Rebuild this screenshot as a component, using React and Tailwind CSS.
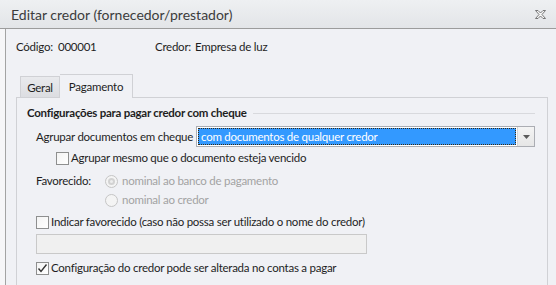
import React from "react";

const font = { fontFamily: 'Lato, "Open Sans", sans-serif' };

const Checkbox = ({ checked }) => (
  <span className="flex h-[13px] w-[13px] shrink-0 items-center justify-center border border-[#8e8f8f] bg-gradient-to-br from-[#f4f4f4] to-[#ffffff]">
    {checked && (
      <svg width="11" height="11" viewBox="0 0 11 11">
        <path d="M1.5 5.5 L4 8.5 L9.5 1.5" fill="none" stroke="#333" strokeWidth="1.4" />
      </svg>
    )}
  </span>
);

const Radio = ({ selected }) => (
  <span className="flex h-[13px] w-[13px] shrink-0 items-center justify-center rounded-full border border-[#c5c5c5] bg-[#f4f4f4]">
    {selected && <span className="h-[7px] w-[7px] rounded-full border-2 border-[#d2d2d2] bg-[#ededed]" />}
  </span>
);

const CloseIcon = () => (
  <svg width="11" height="9" viewBox="0 0 11 9">
    <path
      d="M0.5 0.5 H3 L5.5 3 L8 0.5 H10.5 L7 4.5 L10.5 8.5 H8 L5.5 6 L3 8.5 H0.5 L4 4.5 Z"
      fill="#f5f5f5"
      stroke="#6b6b6b"
      strokeWidth="0.9"
    />
  </svg>
);

export default function App() {
  return (
    <div className="flex h-[285px] w-[556px] flex-col overflow-hidden whitespace-nowrap bg-[#f6f6f8] text-[11.5px] tracking-[-0.25px] text-[#1e1e1e]" style={font}>
      {/* Title bar */}
      <div className="flex h-[29px] shrink-0 items-center justify-between border-b border-[#9c9c9c] bg-gradient-to-b from-[#eef0f2] to-[#e3e5e8] pl-[11px] pr-[10px]">
        <span className="text-[14px] tracking-normal text-[#3c3c3c]">Editar credor (fornecedor/prestador)</span>
        <CloseIcon />
      </div>

      {/* Body */}
      <div className="ml-[5px] flex flex-1 flex-col border-l border-[#a3a3a3] bg-[#f0f1f5]">
        <div className="mt-[10px] flex h-[16px] items-center pl-[10px]">
          <span className="w-[42px] shrink-0">Código:</span>
          <span className="w-[97px] shrink-0">000001</span>
          <span className="w-[40px] shrink-0">Credor:</span>
          <span>Empresa de luz</span>
        </div>

        {/* Tabs */}
        <div className="ml-[14px] mt-[19px] flex items-end">
          <div className="flex h-[21px] w-[40px] items-center justify-center border border-b-0 border-[#d0d1d5] bg-gradient-to-b from-[#e9eaed] to-[#dcdde1] pt-[1px]">
            Geral
          </div>
          <div className="relative -mb-[1px] flex h-[24px] w-[73px] items-start justify-center border border-b-0 border-l-0 border-[#d0d1d5] bg-[#f0f1f5] pt-[3px]">
            Pagamento
          </div>
        </div>

        {/* Panel */}
        <div className="ml-[10px] mr-[8px] flex flex-1 flex-col border border-b-0 border-[#d0d1d5] pl-[10px] pr-[12px] pt-[7px]">
          <div className="flex h-[16px] items-center gap-[6px]">
            <span className="font-bold">Configurações para pagar credor com cheque</span>
            <span className="h-px flex-1 bg-[#d8d9dd]" />
          </div>

          <div className="ml-[9px] mt-[5px] flex h-[21px] items-center">
            <span className="w-[160px] shrink-0">Agrupar documentos em cheque</span>
            <div className="flex h-[21px] flex-1 border border-[#abadb3] bg-white">
              <div className="m-[1px] flex flex-1 items-center border border-dotted border-[#3a2a10] bg-[#3399ff] pl-[2px] text-white">
                com documentos de qualquer credor
              </div>
              <div className="flex w-[17px] items-center justify-center border-l border-[#d5d5d5] bg-gradient-to-b from-[#f4f4f4] to-[#e6e6e6]">
                <svg width="7" height="4" viewBox="0 0 7 4">
                  <path d="M0 0 H7 L3.5 4 Z" fill="#5a5a5a" />
                </svg>
              </div>
            </div>
          </div>

          <div className="ml-[29px] mt-[3px] flex h-[16px] items-center gap-[2px]">
            <Checkbox />
            <span>Agrupar mesmo que o documento esteja vencido</span>
          </div>

          <div className="ml-[9px] mt-[7px] flex h-[16px] items-center">
            <span className="w-[69px] shrink-0">Favorecido:</span>
            <Radio selected />
            <span className="ml-[4px] text-[#a3a3a3]">nominal ao banco de pagamento</span>
          </div>

          <div className="ml-[78px] mt-[3px] flex h-[16px] items-center">
            <Radio />
            <span className="ml-[4px] text-[#a3a3a3]">nominal ao credor</span>
          </div>

          <div className="ml-[9px] mt-[6px] flex h-[16px] items-center gap-[2px]">
            <Checkbox />
            <span>Indicar favorecido (caso não possa ser utilizado o nome do credor)</span>
          </div>

          <div className="ml-[9px] mt-[4px] h-[20px] w-[331px] border border-[#c9c9c9] bg-[#f0f0f0]" />

          <div className="ml-[9px] mt-[6px] flex h-[16px] items-center gap-[2px]">
            <Checkbox checked />
            <span>Configuração do credor pode ser alterada no contas a pagar</span>
          </div>

          <div className="mt-[6px] h-[16px] font-bold">Controle de saldos</div>
        </div>
      </div>
    </div>
  );
}
